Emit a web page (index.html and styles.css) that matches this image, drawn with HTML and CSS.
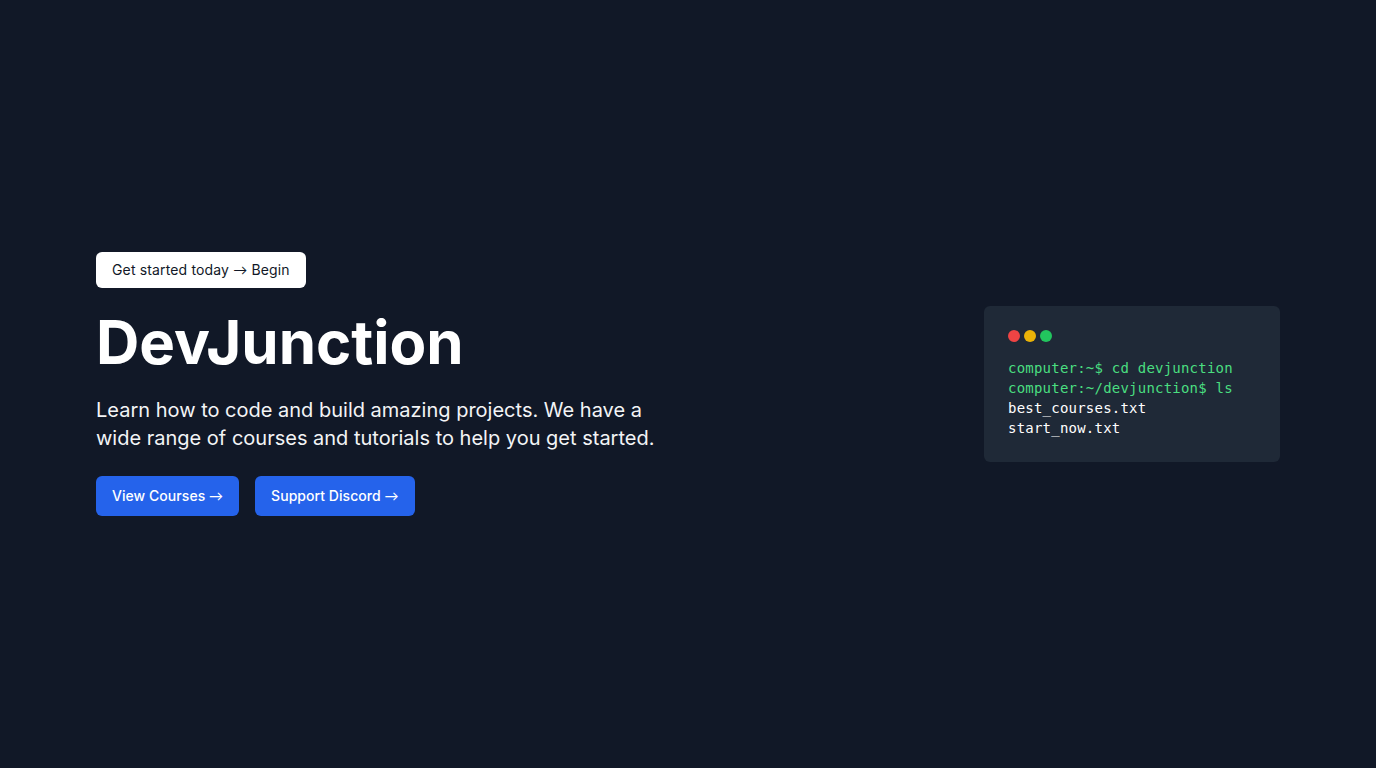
FILE: index.html
```html
<!DOCTYPE html>
<html lang="en">
<head>
<meta charset="utf-8">
<title>DevJunction</title>
<link rel="stylesheet" href="styles.css">
</head>
<body>
<main class="hero">
  <div class="hero-inner">
    <section class="intro">
      <a class="badge" href="#">Get started today <span class="arrow">→</span> Begin</a>
      <h1 class="title">DevJunction</h1>
      <p class="lead">Learn how to code and build amazing projects. We have a wide range of courses and tutorials to help you get started.</p>
      <div class="actions">
        <a class="btn" href="#">View Courses <span class="arrow">→</span></a>
        <a class="btn" href="#">Support Discord <span class="arrow">→</span></a>
      </div>
    </section>
    <aside class="terminal">
      <div class="dots">
        <span class="dot red"></span>
        <span class="dot yellow"></span>
        <span class="dot green"></span>
      </div>
      <pre class="code"><span class="cmd">computer:~$ cd devjunction</span>
<span class="cmd">computer:~/devjunction$ ls</span>
<span class="out">best_courses.txt</span>
<span class="out">start_now.txt</span></pre>
    </aside>
  </div>
</main>
</body>
</html>
```
FILE: styles.css
```css
* { box-sizing: border-box; }
html, body { margin: 0; padding: 0; }
body {
  background: #111827;
  font-family: Inter, "Noto Sans", sans-serif;
  color: #fff;
}
.hero {
  min-height: 100vh;
  display: flex;
  align-items: center;
  padding: 0 96px;
}
.hero-inner {
  width: 100%;
  display: flex;
  justify-content: space-between;
  align-items: center;
}
.intro {
  display: flex;
  flex-direction: column;
  align-items: flex-start;
}
.arrow {
  font-family: Lato, sans-serif;
}
.badge {
  display: inline-block;
  background: #fff;
  color: #111827;
  font-size: 14px;
  line-height: 20px;
  letter-spacing: 0.15px;
  padding: 8px 16px;
  border-radius: 6px;
  text-decoration: none;
}
.title {
  margin: 24px 0 0;
  font-size: 60px;
  line-height: 60px;
  font-weight: 700;
}
.lead {
  margin: 24px 0 0;
  max-width: 576px;
  font-size: 20px;
  line-height: 28px;
  color: #f3f4f6;
}
.actions {
  margin-top: 24px;
  display: flex;
  gap: 16px;
}
.btn {
  display: inline-block;
  background: #2563eb;
  color: #fff;
  font-size: 14px;
  line-height: 20px;
  font-weight: 500;
  letter-spacing: 0.05px;
  padding: 10px 16px;
  border-radius: 6px;
  text-decoration: none;
}
.terminal {
  width: 296px;
  background: #1f2937;
  border-radius: 6px;
  padding: 24px;
}
.dots {
  display: flex;
  gap: 4px;
}
.dot {
  width: 12px;
  height: 12px;
  border-radius: 50%;
}
.red { background: #ef4444; }
.yellow { background: #eab308; }
.green { background: #22c55e; }
.code {
  margin: 16px 0 0;
  font-family: "DejaVu Sans Mono", "Liberation Mono", monospace;
  font-size: 14px;
  line-height: 20px;
  letter-spacing: 0.22px;
  color: #fff;
}
.cmd { color: #4ade80; }
.out { color: #fff; }
```
